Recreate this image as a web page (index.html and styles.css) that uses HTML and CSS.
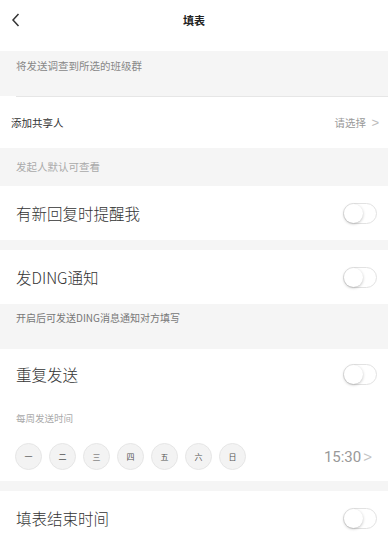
FILE: index.html
```html
<!DOCTYPE html>
<html lang="zh-CN">
<head>
    <meta charset="UTF-8">
    <meta name="viewport" content="width=device-width, initial-scale=1.0">
    <title>填表</title>
    <link rel="stylesheet" href="styles.css">
</head>
<body>
    <div class="header">
        <svg class="back" width="10" height="14" viewBox="0 0 10 14"><path d="M7.5 1 L2 7 L7.5 13" fill="none" stroke="#333" stroke-width="1.5"/></svg>
        <div class="title">填表</div>
    </div>

    <div class="note note-tall">将发送调查到所选的班级群</div>
    <div class="line"></div>

    <div class="row row-small">
        <div class="label-small">添加共享人</div>
        <div class="pick">请选择 <span class="arrow">&gt;</span></div>
    </div>

    <div class="note note-mid light">发起人默认可查看</div>

    <div class="row">
        <div class="label">有新回复时提醒我</div>
        <div class="toggle"><span class="knob"></span></div>
    </div>

    <div class="gap"></div>

    <div class="row">
        <div class="label">发DING通知</div>
        <div class="toggle"><span class="knob"></span></div>
    </div>

    <div class="note note-tall dark">开启后可发送DING消息通知对方填写</div>

    <div class="block">
        <div class="row">
            <div class="label">重复发送</div>
            <div class="toggle"><span class="knob"></span></div>
        </div>
        <div class="sub">每周发送时间</div>
        <div class="days">
            <div class="day">一</div>
            <div class="day">二</div>
            <div class="day">三</div>
            <div class="day">四</div>
            <div class="day">五</div>
            <div class="day">六</div>
            <div class="day">日</div>
            <div class="time">15:30<span class="arrow">&gt;</span></div>
        </div>
    </div>

    <div class="gap"></div>

    <div class="row">
        <div class="label">填表结束时间</div>
        <div class="toggle"><span class="knob"></span></div>
    </div>
</body>
</html>
```

FILE: styles.css
```css
body {margin:0; background:#fff; font-family:"Noto Sans CJK SC", "Noto Sans", sans-serif; color:#333; width:388px; overflow:hidden}

.header {height:51px; position:relative; display:flex; align-items:center; justify-content:center; background:#fff}
.header .back {position:absolute; left:11px; top:13px}
.title {font-size:11px; font-weight:bold; color:#222; margin-top:-11px}

.note {background:#f5f5f5; font-size:10.5px; color:#888; padding-left:16px; box-sizing:border-box}
.note-tall {height:45px; padding-top:7px}
.note-mid {height:38px; line-height:38px}
.note.light {color:#aaa}
.note.dark {color:#777; font-size:10px; padding-top:6px}

.line {height:1px; background:#e6e6e6; margin-left:16px}

.row {height:54px; display:flex; align-items:center; justify-content:space-between; padding:0 11px 0 16px; background:#fff}
.row-small {height:51px; padding-left:11px}
.label {font-size:15.5px; font-weight:300; color:#333}
.label-small {font-size:10.5px; color:#333}
.pick {font-size:10.5px; color:#999; margin-right:-2px}
.arrow {font-family:"Liberation Sans", sans-serif; color:#bbb; font-size:13px; margin-left:3px}

.toggle {width:32px; height:19px; border:1px solid #e2e2e2; border-radius:11px; background:#fff; position:relative}
.knob {position:absolute; left:0; top:0; width:19px; height:19px; border-radius:50%; background:#fff; box-shadow:0 1px 3px rgba(0,0,0,0.25)}

.gap {height:10px; background:#f5f5f5}

.block {background:#fff; height:132px}
.block .row {height:50px}
.sub {font-size:9.5px; color:#aaa; padding-left:16px; margin-top:12px}
.days {display:flex; align-items:center; gap:7px; padding:18px 16px 0 15px}
.day {width:25px; height:25px; border-radius:50%; background:#f3f3f3; border:1px solid #e6e6e6; display:flex; align-items:center; justify-content:center; font-size:8px; color:#555}
.time {margin-left:auto; font-family:Roboto, sans-serif; font-size:15px; color:#999}
.time .arrow {font-size:15px; margin-left:2px; color:#c4c4c4}
```
